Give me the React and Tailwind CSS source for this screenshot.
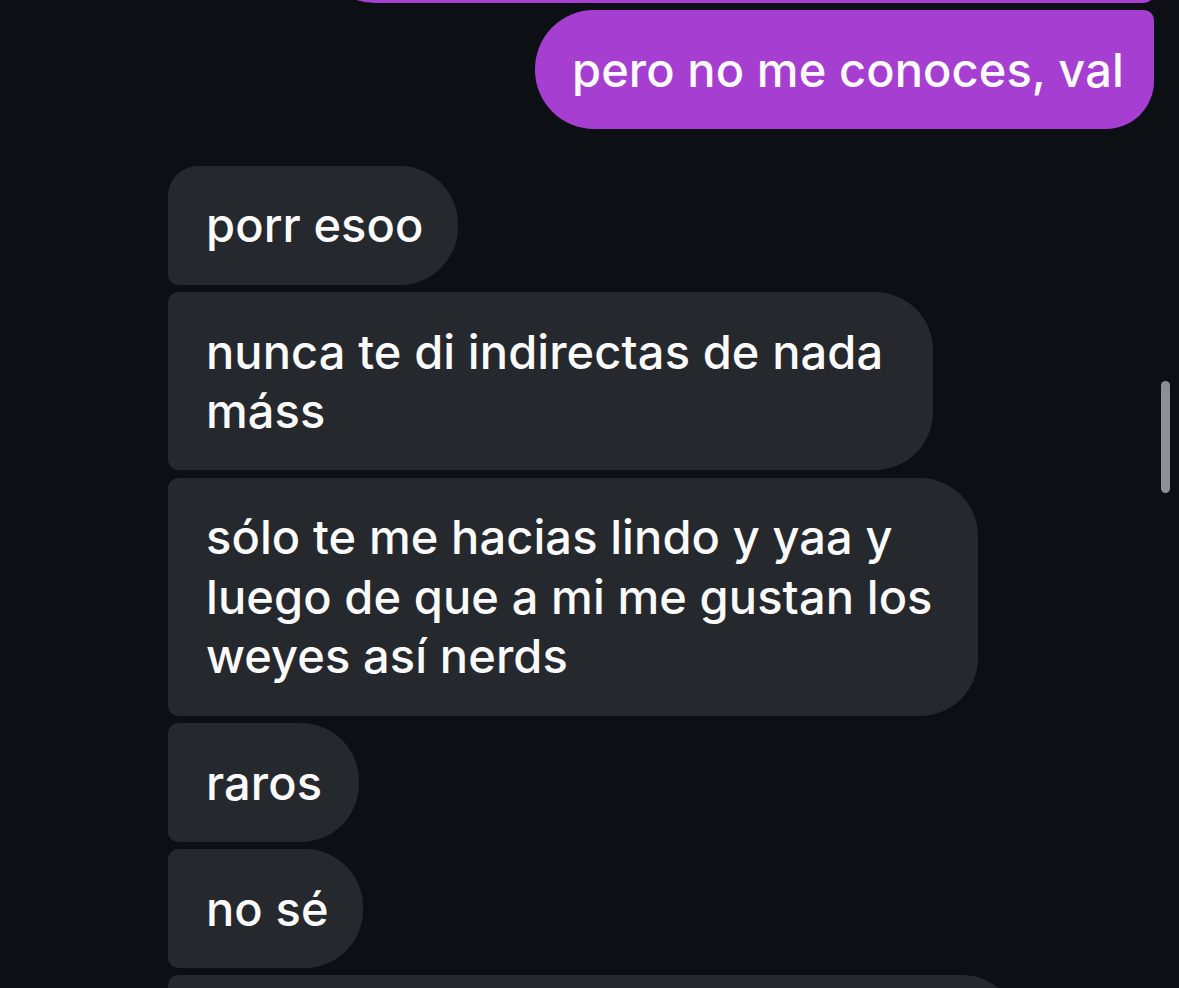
import React from 'react';

const theirs = [
  { lines: ['porr esoo'], w: 'w-[290px]', shape: 'rounded-tl-[30px] rounded-bl-[10px]' },
  { lines: ['nunca te di indirectas de nada', 'máss'], w: 'w-[765px]', shape: 'rounded-l-[10px]' },
  {
    lines: ['sólo te me hacias lindo y yaa y', 'luego de que a mi me gustan los', 'weyes así nerds'],
    w: 'w-[810px]',
    shape: 'rounded-l-[10px]',
  },
  { lines: ['raros'], w: 'w-[191px]', shape: 'rounded-l-[10px]' },
  { lines: ['no sé'], w: 'w-[195px]', shape: 'rounded-l-[10px]' },
  { lines: [''], w: 'w-[852px]', shape: 'rounded-l-[10px]' },
];

export default function App() {
  return (
    <div className="relative h-[988px] overflow-hidden bg-[#0c0f13] font-['Inter',sans-serif] text-[47px] leading-[59.5px] font-medium text-[#fafafa] tracking-[0.002em]">
      {/* my messages */}
      <div className="flex flex-col items-end gap-[7px] pr-[25px]">
        <div className="-mt-[115px] h-[118px] w-[838px] rounded-l-[59px] rounded-tr-[10px] rounded-br-[10px] bg-[#a63ed2]" />
        <div className="w-[619px] whitespace-nowrap rounded-l-[59px] rounded-tr-[10px] rounded-br-[48px] bg-[#a63ed2] py-[29.5px] pl-[37px]">
          pero no me conoces, val
        </div>
      </div>

      {/* their messages */}
      <div className="mt-[37px] flex flex-col items-start gap-[7.3px] pl-[168px]">
        {theirs.map((m, i) => (
          <div
            key={i}
            className={`${m.w} ${m.shape} whitespace-nowrap rounded-r-[58px] bg-[#25282d] py-[29.75px] pl-[38px]`}
          >
            {m.lines.map((l, j) => (
              <div key={j}>{l || '\u00a0'}</div>
            ))}
          </div>
        ))}
      </div>

      {/* scrollbar */}
      <div className="absolute right-[9px] top-[381px] h-[112px] w-[9px] rounded-full bg-[#8e8f94]" />
    </div>
  );
}
